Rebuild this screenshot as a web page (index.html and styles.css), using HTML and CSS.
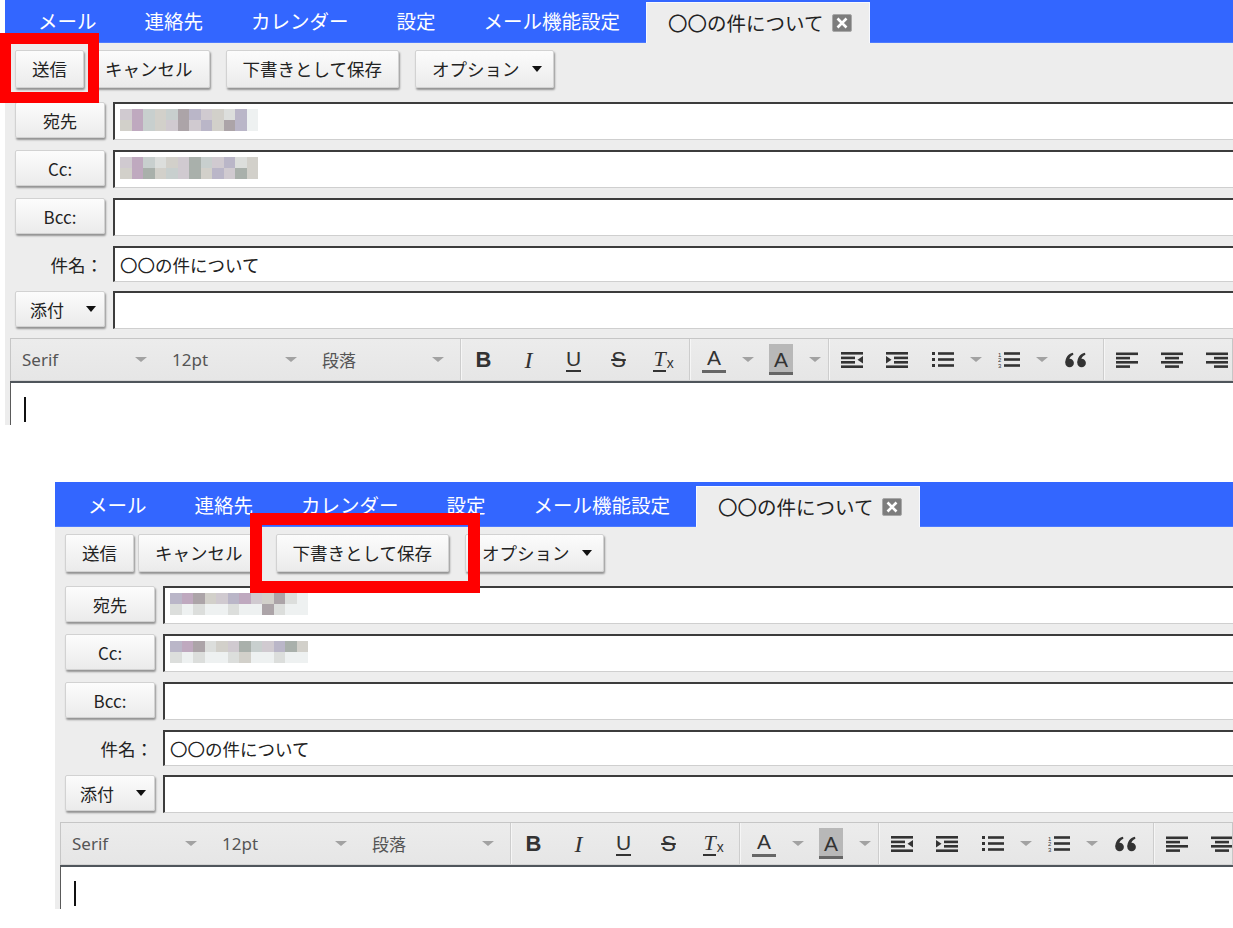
FILE: index.html
```html
<!DOCTYPE html>
<html lang="ja">
<head>
<meta charset="utf-8">
<title>メール作成</title>
<link rel="stylesheet" href="styles.css">
</head>
<body>
<div class="page">

  <section class="shot shot-top">
    <nav class="tabs">
      <span class="tab tab-first">メール</span>
      <span class="tab">連絡先</span>
      <span class="tab">カレンダー</span>
      <span class="tab">設定</span>
      <span class="tab">メール機能設定</span>
      <span class="tab tab-active">〇〇の件について<svg class="close" viewBox="0 0 20 18" width="20" height="18"><rect x="0.5" y="0.5" width="19" height="17" rx="1.5" fill="#7d7d7d" stroke="#a8a8a8"/><path d="M5.5 4.5 L14.5 13.5 M14.5 4.5 L5.5 13.5" stroke="#fff" stroke-width="2.6"/></svg></span>
    </nav>
    <div class="actions">
      <button class="btn btn-send">送信</button>
      <button class="btn btn-gap">キャンセル</button>
      <button class="btn btn-gap2">下書きとして保存</button>
      <button class="btn btn-gap2 btn-opt">オプション<i class="caret"></i></button>
    </div>
    <div class="fields">
      <div class="row">
        <button class="btn fbtn">宛先</button>
        <div class="input">
          <div class="mosaic">
            <i class="k1"></i><i class="k2"></i><i class="k3"></i><i class="k4"></i><i class="k3"></i><i class="k5"></i><i class="k6"></i><i class="k1"></i><i class="k4"></i><i class="k7"></i><i class="k6"></i><i class="k9"></i>
            <i class="k4"></i><i class="k2"></i><i class="k3"></i><i class="k4"></i><i class="k1"></i><i class="k5"></i><i class="k1"></i><i class="k6"></i><i class="k4"></i><i class="k5"></i><i class="k6"></i><i class="k9"></i>
          </div>
        </div>
      </div>
      <div class="row">
        <button class="btn fbtn">Cc:</button>
        <div class="input">
          <div class="mosaic">
            <i class="k1"></i><i class="k2"></i><i class="k3"></i><i class="k7"></i><i class="k4"></i><i class="k1"></i><i class="k8"></i><i class="k3"></i><i class="k1"></i><i class="k6"></i><i class="k7"></i><i class="k4"></i>
            <i class="k4"></i><i class="k2"></i><i class="k8"></i><i class="k4"></i><i class="k3"></i><i class="k1"></i><i class="k8"></i><i class="k4"></i><i class="k6"></i><i class="k1"></i><i class="k8"></i><i class="k4"></i>
          </div>
        </div>
      </div>
      <div class="row">
        <button class="btn fbtn">Bcc:</button>
        <div class="input"></div>
      </div>
      <div class="row row-subject">
        <label class="flabel">件名：</label>
        <div class="input">〇〇の件について</div>
      </div>
      <div class="row">
        <button class="btn fbtn fbtn-attach">添付<i class="caret"></i></button>
        <div class="input"></div>
      </div>
    </div>
    <div class="editor">
      <div class="etb">
        <div class="dd">Serif<i class="gcaret"></i></div>
        <div class="dd">12pt<i class="gcaret"></i></div>
        <div class="dd dd-last">段落<i class="gcaret"></i></div>
        <div class="grp grp-fmt">
          <span class="tb"><span class="ti-b">B</span></span>
          <span class="tb"><span class="ti-i">I</span></span>
          <span class="tb"><span class="ti-u">U</span></span>
          <span class="tb"><span class="ti-s">S</span></span>
          <span class="tb"><span class="ti-tx"><span class="tx-t">T</span><span class="tx-x">x</span></span></span>
        </div>
        <div class="grp grp-color">
          <span class="tbm"><span class="ti-a">A</span></span><span class="tba"><i class="gcaret"></i></span>
          <span class="tbm"><span class="ti-a ti-a-hl">A</span></span><span class="tba"><i class="gcaret"></i></span>
        </div>
        <div class="grp grp-list">
          <span class="tb"><svg class="ico" viewBox="0 0 22 17" width="22" height="17"><rect x="0" y="1" width="22" height="2.6"/><rect x="0" y="5.6" width="14" height="2.6"/><rect x="0" y="10" width="14" height="2.6"/><rect x="0" y="14.4" width="22" height="2.6"/><polygon points="22,5 16.5,8.8 22,12.6"/></svg></span>
          <span class="tb"><svg class="ico" viewBox="0 0 22 17" width="22" height="17"><rect x="0" y="1" width="22" height="2.6"/><rect x="8" y="5.6" width="14" height="2.6"/><rect x="8" y="10" width="14" height="2.6"/><rect x="0" y="14.4" width="22" height="2.6"/><polygon points="0,5 5.5,8.8 0,12.6"/></svg></span>
          <span class="tbl"><svg class="ico" viewBox="0 0 22 17" width="22" height="17"><rect x="0" y="1" width="3" height="3"/><rect x="6" y="1.2" width="16" height="2.6"/><rect x="0" y="7" width="3" height="3"/><rect x="6" y="7.2" width="16" height="2.6"/><rect x="0" y="13" width="3" height="3"/><rect x="6" y="13.2" width="16" height="2.6"/></svg></span><span class="tba tba-l"><i class="gcaret"></i></span>
          <span class="tbl"><svg class="ico" viewBox="0 0 22 17" width="22" height="17"><text x="0" y="5.5" font-size="6" font-family="Liberation Sans, sans-serif">1</text><text x="0" y="11.3" font-size="6" font-family="Liberation Sans, sans-serif">2</text><text x="0" y="17" font-size="6" font-family="Liberation Sans, sans-serif">3</text><rect x="6" y="1.2" width="16" height="2.6"/><rect x="6" y="7.2" width="16" height="2.6"/><rect x="6" y="13.2" width="16" height="2.6"/></svg></span><span class="tba tba-l"><i class="gcaret"></i></span>
          <span class="tbq"><svg class="ico" viewBox="0 0 22 16" width="22" height="16"><circle cx="4.6" cy="11" r="4.3"/><path d="M0.4 11 C0.3 5.5 3 2 8 0.8 L8.4 2.8 C5.6 3.8 4.3 5.8 4.4 8 Z"/><circle cx="16.6" cy="11" r="4.3"/><path d="M12.4 11 C12.3 5.5 15 2 20 0.8 L20.4 2.8 C17.6 3.8 16.3 5.8 16.4 8 Z"/></svg></span>
        </div>
        <div class="grp grp-align">
          <span class="tb"><svg class="ico" viewBox="0 0 22 16" width="22" height="16"><rect x="0" y="0.5" width="22" height="2.6"/><rect x="0" y="4.8" width="14" height="2.6"/><rect x="0" y="9" width="22" height="2.6"/><rect x="0" y="13.3" width="14" height="2.6"/></svg></span>
          <span class="tb"><svg class="ico" viewBox="0 0 22 16" width="22" height="16"><rect x="0" y="0.5" width="22" height="2.6"/><rect x="4" y="4.8" width="14" height="2.6"/><rect x="0" y="9" width="22" height="2.6"/><rect x="4" y="13.3" width="14" height="2.6"/></svg></span>
          <span class="tb"><svg class="ico" viewBox="0 0 22 16" width="22" height="16"><rect x="0" y="0.5" width="22" height="2.6"/><rect x="8" y="4.8" width="14" height="2.6"/><rect x="0" y="9" width="22" height="2.6"/><rect x="8" y="13.3" width="14" height="2.6"/></svg></span>
        </div>
      </div>
      <div class="earea"><span class="cursor"></span></div>
    </div>
  </section>

  <section class="shot shot-bottom">
    <nav class="tabs">
      <span class="tab tab-first">メール</span>
      <span class="tab">連絡先</span>
      <span class="tab">カレンダー</span>
      <span class="tab">設定</span>
      <span class="tab">メール機能設定</span>
      <span class="tab tab-active">〇〇の件について<svg class="close" viewBox="0 0 20 18" width="20" height="18"><rect x="0.5" y="0.5" width="19" height="17" rx="1.5" fill="#7d7d7d" stroke="#a8a8a8"/><path d="M5.5 4.5 L14.5 13.5 M14.5 4.5 L5.5 13.5" stroke="#fff" stroke-width="2.6"/></svg></span>
    </nav>
    <div class="actions">
      <button class="btn btn-send">送信</button>
      <button class="btn btn-gap">キャンセル</button>
      <button class="btn btn-gap2">下書きとして保存</button>
      <button class="btn btn-gap2 btn-opt">オプション<i class="caret"></i></button>
    </div>
    <div class="fields">
      <div class="row">
        <button class="btn fbtn">宛先</button>
        <div class="input">
          <div class="mosaic">
            <i class="k6"></i><i class="k2"></i><i class="k5"></i><i class="k4"></i><i class="k1"></i><i class="k6"></i><i class="k2"></i><i class="k1"></i><i class="k4"></i><i class="k5"></i><i class="k7"></i><i class="k9"></i>
            <i class="k7"></i><i class="k9"></i><i class="k7"></i><i class="k9"></i><i class="k9"></i><i class="k7"></i><i class="k9"></i><i class="k9"></i><i class="k5"></i><i class="k7"></i><i class="k9"></i><i class="k9"></i>
          </div>
        </div>
      </div>
      <div class="row">
        <button class="btn fbtn">Cc:</button>
        <div class="input">
          <div class="mosaic">
            <i class="k6"></i><i class="k2"></i><i class="k5"></i><i class="k7"></i><i class="k4"></i><i class="k1"></i><i class="k8"></i><i class="k3"></i><i class="k1"></i><i class="k6"></i><i class="k8"></i><i class="k4"></i>
            <i class="k7"></i><i class="k9"></i><i class="k7"></i><i class="k9"></i><i class="k9"></i><i class="k7"></i><i class="k4"></i><i class="k9"></i><i class="k9"></i><i class="k7"></i><i class="k9"></i><i class="k9"></i>
          </div>
        </div>
      </div>
      <div class="row">
        <button class="btn fbtn">Bcc:</button>
        <div class="input"></div>
      </div>
      <div class="row row-subject">
        <label class="flabel">件名：</label>
        <div class="input">〇〇の件について</div>
      </div>
      <div class="row">
        <button class="btn fbtn fbtn-attach">添付<i class="caret"></i></button>
        <div class="input"></div>
      </div>
    </div>
    <div class="editor">
      <div class="etb">
        <div class="dd">Serif<i class="gcaret"></i></div>
        <div class="dd">12pt<i class="gcaret"></i></div>
        <div class="dd dd-last">段落<i class="gcaret"></i></div>
        <div class="grp grp-fmt">
          <span class="tb"><span class="ti-b">B</span></span>
          <span class="tb"><span class="ti-i">I</span></span>
          <span class="tb"><span class="ti-u">U</span></span>
          <span class="tb"><span class="ti-s">S</span></span>
          <span class="tb"><span class="ti-tx"><span class="tx-t">T</span><span class="tx-x">x</span></span></span>
        </div>
        <div class="grp grp-color">
          <span class="tbm"><span class="ti-a">A</span></span><span class="tba"><i class="gcaret"></i></span>
          <span class="tbm"><span class="ti-a ti-a-hl">A</span></span><span class="tba"><i class="gcaret"></i></span>
        </div>
        <div class="grp grp-list">
          <span class="tb"><svg class="ico" viewBox="0 0 22 17" width="22" height="17"><rect x="0" y="1" width="22" height="2.6"/><rect x="0" y="5.6" width="14" height="2.6"/><rect x="0" y="10" width="14" height="2.6"/><rect x="0" y="14.4" width="22" height="2.6"/><polygon points="22,5 16.5,8.8 22,12.6"/></svg></span>
          <span class="tb"><svg class="ico" viewBox="0 0 22 17" width="22" height="17"><rect x="0" y="1" width="22" height="2.6"/><rect x="8" y="5.6" width="14" height="2.6"/><rect x="8" y="10" width="14" height="2.6"/><rect x="0" y="14.4" width="22" height="2.6"/><polygon points="0,5 5.5,8.8 0,12.6"/></svg></span>
          <span class="tbl"><svg class="ico" viewBox="0 0 22 17" width="22" height="17"><rect x="0" y="1" width="3" height="3"/><rect x="6" y="1.2" width="16" height="2.6"/><rect x="0" y="7" width="3" height="3"/><rect x="6" y="7.2" width="16" height="2.6"/><rect x="0" y="13" width="3" height="3"/><rect x="6" y="13.2" width="16" height="2.6"/></svg></span><span class="tba tba-l"><i class="gcaret"></i></span>
          <span class="tbl"><svg class="ico" viewBox="0 0 22 17" width="22" height="17"><text x="0" y="5.5" font-size="6" font-family="Liberation Sans, sans-serif">1</text><text x="0" y="11.3" font-size="6" font-family="Liberation Sans, sans-serif">2</text><text x="0" y="17" font-size="6" font-family="Liberation Sans, sans-serif">3</text><rect x="6" y="1.2" width="16" height="2.6"/><rect x="6" y="7.2" width="16" height="2.6"/><rect x="6" y="13.2" width="16" height="2.6"/></svg></span><span class="tba tba-l"><i class="gcaret"></i></span>
          <span class="tbq"><svg class="ico" viewBox="0 0 22 16" width="22" height="16"><circle cx="4.6" cy="11" r="4.3"/><path d="M0.4 11 C0.3 5.5 3 2 8 0.8 L8.4 2.8 C5.6 3.8 4.3 5.8 4.4 8 Z"/><circle cx="16.6" cy="11" r="4.3"/><path d="M12.4 11 C12.3 5.5 15 2 20 0.8 L20.4 2.8 C17.6 3.8 16.3 5.8 16.4 8 Z"/></svg></span>
        </div>
        <div class="grp grp-align">
          <span class="tb"><svg class="ico" viewBox="0 0 22 16" width="22" height="16"><rect x="0" y="0.5" width="22" height="2.6"/><rect x="0" y="4.8" width="14" height="2.6"/><rect x="0" y="9" width="22" height="2.6"/><rect x="0" y="13.3" width="14" height="2.6"/></svg></span>
          <span class="tb"><svg class="ico" viewBox="0 0 22 16" width="22" height="16"><rect x="0" y="0.5" width="22" height="2.6"/><rect x="4" y="4.8" width="14" height="2.6"/><rect x="0" y="9" width="22" height="2.6"/><rect x="4" y="13.3" width="14" height="2.6"/></svg></span>
          <span class="tb"><svg class="ico" viewBox="0 0 22 16" width="22" height="16"><rect x="0" y="0.5" width="22" height="2.6"/><rect x="8" y="4.8" width="14" height="2.6"/><rect x="0" y="9" width="22" height="2.6"/><rect x="8" y="13.3" width="14" height="2.6"/></svg></span>
        </div>
      </div>
      <div class="earea"><span class="cursor"></span></div>
    </div>
  </section>

  <div class="mark mark-send"></div>
  <div class="mark mark-draft"></div>
</div>
</body>
</html>
```

FILE: styles.css
```css
* { box-sizing: border-box; }

html, body {
  margin: 0;
  padding: 0;
  background: #ffffff;
  overflow: hidden;
}

body {
  font-family: "Noto Sans CJK JP", "Noto Sans", sans-serif;
  color: #222;
}

.page {
  position: relative;
  display: flow-root;
  width: 1233px;
  height: 928px;
}

.shot {
  display: flex;
  flex-direction: column;
  background: #ededed;
  overflow: hidden;
}

.shot-top {
  margin: -2px 0 0 5px;
  height: 427px;
}

.shot-bottom {
  margin: 57px 0 0 55px;
  height: 427px;
}

/* ---------- tabs ---------- */
.tabs {
  display: flex;
  align-items: flex-end;
  height: 45px;
  flex-shrink: 0;
  background: #3366ff;
  border-bottom: 1px solid #4d7bff;
  white-space: nowrap;
}

.tab {
  display: flex;
  align-items: center;
  height: 44px;
  padding: 2px 24px 0;
  font-size: 19.5px;
  color: #ffffff;
  line-height: 1;
}

.tab-first { margin-left: 9px; }

.tab-active {
  height: 41px;
  margin-left: 2px;
  margin-bottom: -1px;
  padding: 0 17px 0 21px;
  background: #ededed;
  color: #222;
  border: 1px solid #f7f9ff;
  border-bottom: none;
}

.close {
  display: block;
  margin-left: 8px;
  flex-shrink: 0;
}

/* ---------- buttons ---------- */
.btn {
  display: inline-flex;
  align-items: center;
  justify-content: center;
  height: 38px;
  margin: 0;
  padding: 0 16px;
  font-family: "Noto Sans CJK JP", "Noto Sans", sans-serif;
  font-size: 17.5px;
  line-height: 1;
  color: #222;
  background: linear-gradient(#fcfcfc, #ebebeb);
  border: 1px solid #d2d2d2;
  border-radius: 2px;
  box-shadow: 1px 2px 2px rgba(0, 0, 0, 0.38);
  white-space: nowrap;
  flex-shrink: 0;
}

.caret {
  display: inline-block;
  width: 0;
  height: 0;
  border-left: 5.5px solid transparent;
  border-right: 5.5px solid transparent;
  border-top: 6px solid #111;
}

.actions {
  display: flex;
  align-items: flex-start;
  height: 59px;
  flex-shrink: 0;
  padding: 7px 0 0 10px;
}

.btn-gap { margin-left: 4px; }
.btn-gap2 { margin-left: 16px; }

.btn-opt { padding: 0 11px 0 16px; }
.btn-opt .caret { margin-left: 13px; }

/* ---------- fields ---------- */
.fields {
  display: flex;
  flex-direction: column;
  gap: 10px;
  flex-shrink: 0;
  padding-left: 10px;
}

.row {
  display: flex;
  align-items: flex-start;
  height: 38px;
}

.row-subject { height: 36px; margin-bottom: -1px; }

.fbtn {
  width: 90px;
  height: 36px;
  padding: 0;
  font-size: 17px;
}

.fbtn-attach {
  justify-content: space-between;
  padding: 0 8px 0 14px;
}

.flabel {
  width: 90px;
  height: 36px;
  display: flex;
  align-items: center;
  justify-content: flex-end;
  padding-right: 2px;
  font-size: 17.5px;
  color: #222;
  flex-shrink: 0;
}

.input {
  flex: 1;
  height: 100%;
  margin-left: 8px;
  display: flex;
  align-items: center;
  padding-left: 5px;
  background: #ffffff;
  border-top: 2px solid #3c3c3c;
  border-left: 2px solid #3c3c3c;
  border-bottom: 1px solid #cfcfcf;
  font-size: 17.5px;
  color: #222;
  white-space: nowrap;
}

.mosaic {
  display: grid;
  grid-template-columns: repeat(12, 11.5px);
  grid-template-rows: 11px 11px;
  margin-top: -3px;
}

.mosaic i { display: block; }

.k1 { background: #d0cad0; }
.k2 { background: #bfa9bf; }
.k3 { background: #c8cfce; }
.k4 { background: #d2d0ca; }
.k5 { background: #aca4a8; }
.k6 { background: #bab6c8; }
.k7 { background: #dcdedc; }
.k8 { background: #a9b0ab; }
.k9 { background: #eef1f1; }

/* ---------- editor ---------- */
.editor {
  flex: 1;
  display: flex;
  flex-direction: column;
  margin: 9px 0 0 5px;
  min-height: 0;
}

.etb {
  display: flex;
  align-items: stretch;
  height: 43px;
  flex-shrink: 0;
  background: linear-gradient(#ececec, #e6e6e6);
  border: 1px solid #c6c6c6;
  border-bottom: 1px solid #d4d4d4;
  overflow: hidden;
  white-space: nowrap;
}

.dd {
  width: 150px;
  flex-shrink: 0;
  display: flex;
  align-items: center;
  justify-content: space-between;
  padding: 0 14px 0 11px;
  font-family: "Noto Sans", "Noto Sans CJK JP", sans-serif;
  font-size: 17px;
  color: #555;
}

.dd-last { width: 149px; padding-right: 16px; }

.gcaret {
  display: inline-block;
  width: 0;
  height: 0;
  border-left: 6px solid transparent;
  border-right: 6px solid transparent;
  border-top: 5px solid #a2a2a2;
}

.grp {
  display: flex;
  align-items: stretch;
  flex-shrink: 0;
  border-left: 1px solid #cdcdcd;
  box-shadow: inset 1px 0 0 #f6f6f6;
}

.grp-fmt { padding-right: 3px; }
.grp-color { padding-right: 4px; }
.grp-list { padding-right: 2px; }

.tb, .tbm, .tba, .tbl, .tbq {
  display: flex;
  align-items: center;
  justify-content: center;
  flex-shrink: 0;
}

.tb { width: 45px; }
.tbm { width: 48px; }
.tba { width: 19px; }
.tbl { width: 48px; }
.tba-l { width: 18px; }
.tbq { width: 50px; }

.ico { display: block; fill: #333; }

.ti-b {
  font-family: "Liberation Sans", sans-serif;
  font-weight: bold;
  font-size: 22px;
  line-height: 1;
  color: #333;
}

.ti-i {
  font-family: "Liberation Serif", serif;
  font-style: italic;
  font-size: 24px;
  line-height: 1;
  color: #333;
}

.ti-u {
  font-family: "Liberation Sans", sans-serif;
  font-size: 21px;
  line-height: 1;
  color: #333;
  padding-bottom: 1px;
  border-bottom: 2px solid #333;
}

.ti-s {
  font-family: "Liberation Sans", sans-serif;
  font-size: 22px;
  line-height: 1;
  color: #333;
  text-decoration: line-through;
  text-decoration-thickness: 2px;
}

.ti-tx {
  display: flex;
  align-items: flex-end;
  line-height: 1;
  color: #333;
}

.tx-t {
  font-family: "Liberation Serif", serif;
  font-style: italic;
  font-size: 22px;
  border-bottom: 2.5px solid #333;
}

.tx-x {
  font-family: "Liberation Sans", sans-serif;
  font-size: 14px;
  margin-left: 1px;
  margin-bottom: 2px;
}

.ti-a {
  display: block;
  font-family: "Liberation Sans", sans-serif;
  font-size: 21px;
  line-height: 1;
  color: #333;
  padding: 1px 2px 2px;
  border-bottom: 3px solid #666;
  text-align: center;
  width: 24px;
}

.ti-a-hl {
  background: #b8b8b8;
  padding-top: 5px;
}

.earea {
  flex: 1;
  background: #ffffff;
  border-top: 2px solid #4f555b;
  border-left: 1px solid #5a5a5a;
  padding: 14px 0 0 13px;
}

.cursor {
  display: block;
  width: 2px;
  height: 25px;
  background: #111;
}

/* ---------- red highlight frames ---------- */
.mark {
  position: absolute;
  border: 11px solid #ff0000;
  pointer-events: none;
}

.mark-send {
  left: 0;
  top: 33px;
  width: 99px;
  height: 70px;
}

.mark-draft {
  left: 250px;
  top: 513px;
  width: 230px;
  height: 80px;
  border-width: 12px;
}
```
